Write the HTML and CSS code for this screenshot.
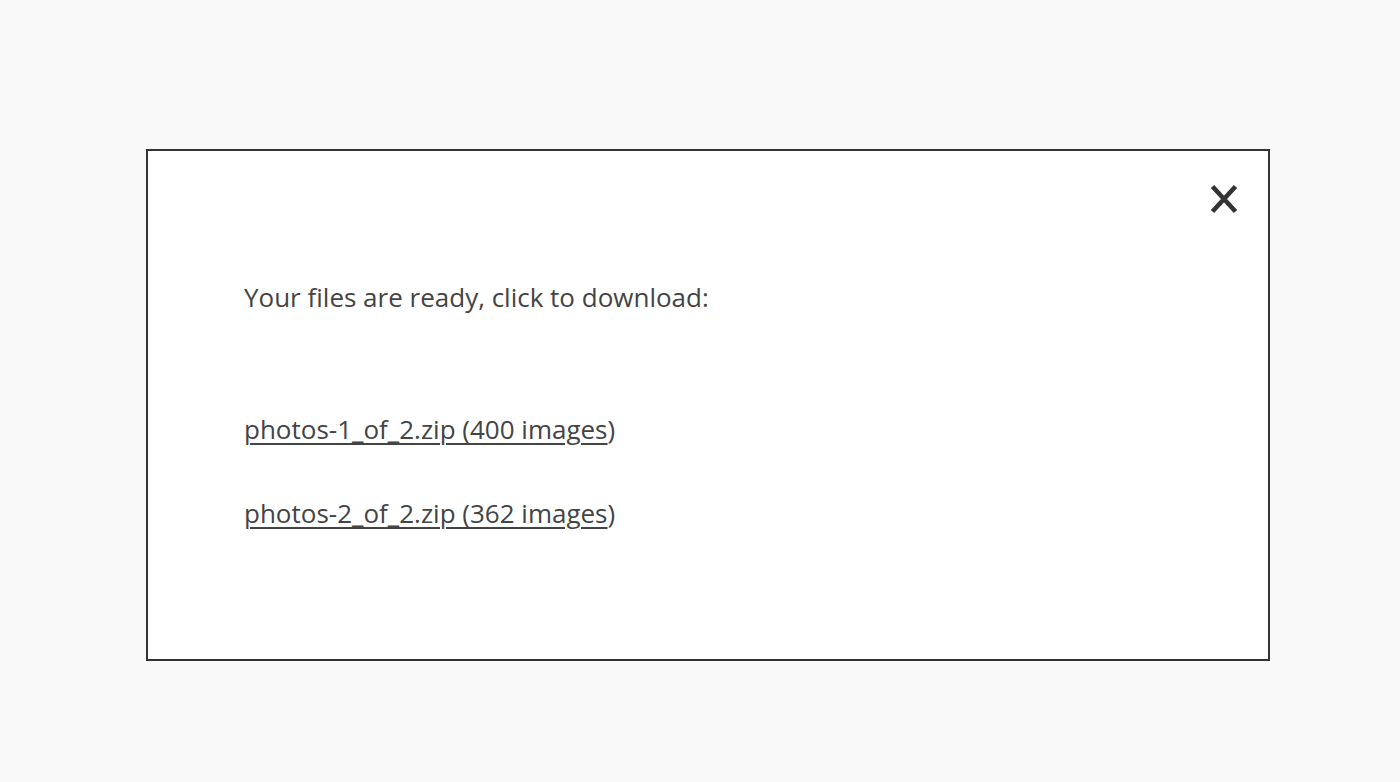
FILE: index.html
```html
<!DOCTYPE html>
<html>
<head>
<meta charset="utf-8">
<link rel="stylesheet" href="styles.css">
</head>
<body>
<div class="page">
  <div class="dialog">
    <div class="dialog-top">
      <button class="close" aria-label="Close">
        <svg width="32" height="32" viewBox="0 0 32 32"><path d="M4.5 3.5 L27.5 28.5 M27.5 3.5 L4.5 28.5" stroke="#333" stroke-width="4.6" stroke-linecap="butt" fill="none"/></svg>
      </button>
    </div>
    <div class="dialog-body">
      <p class="intro">Your files are ready, click to download:</p>
      <ul class="files">
        <li><a href="#">photos-1_of_2.zip (400 images</a>)</li>
        <li><a href="#">photos-2_of_2.zip (362 images</a>)</li>
      </ul>
    </div>
  </div>
</div>
</body>
</html>
```
FILE: styles.css
```css
html, body {
  margin: 0;
  padding: 0;
  background: #f9f9f9;
}
body {
  font-family: "Open Sans", "Liberation Sans", sans-serif;
  color: #444;
}
.page {
  padding: 149px 130px 0 146px;
}
.dialog {
  width: 1120px;
  height: 508px;
  border: 2px solid #333;
  background: #fff;
  box-sizing: content-box;
}
.dialog-top {
  display: flex;
  justify-content: flex-end;
  padding: 32px 28px 0 0;
}
.close {
  border: 0;
  background: none;
  padding: 0;
  width: 32px;
  height: 32px;
  cursor: pointer;
}
.close svg { display: block; }
.dialog-body {
  padding: 66px 96px 0 96px;
}
.intro {
  margin: 0;
  font-size: 26px;
  line-height: 33px;
}
.files {
  list-style: none;
  margin: 99px 0 0 0;
  padding: 0;
}
.files li {
  font-size: 26px;
  line-height: 33px;
  margin-bottom: 51px;
}
.files a {
  color: #444;
  text-decoration: underline;
  text-underline-offset: 4px;
  text-decoration-thickness: 1.5px;
}
```
